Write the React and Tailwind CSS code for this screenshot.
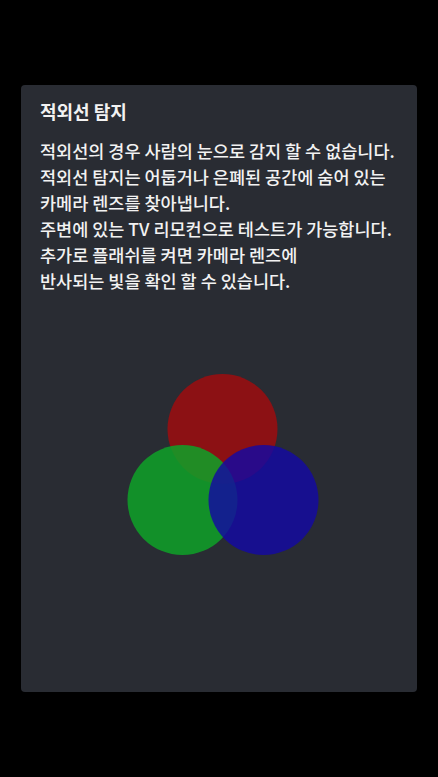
import React from 'react'

const lines = [
  '적외선의 경우 사람의 눈으로 감지 할 수 없습니다.',
  '적외선 탐지는 어둡거나 은폐된 공간에 숨어 있는',
  '카메라 렌즈를 찾아냅니다.',
  '주변에 있는 TV 리모컨으로 테스트가 가능합니다.',
  '추가로 플래쉬를 켜면 카메라 렌즈에',
  '반사되는 빛을 확인 할 수 있습니다.',
]

// three overlapping light circles
const RgbCircles = () => (
  <svg width="200" height="200" viewBox="0 0 200 200" className="block mx-auto">
    <circle cx="103.5" cy="64" r="55" fill="#8c1114" />
    <circle cx="63.5" cy="135" r="55" fill="#0ea228" fillOpacity="0.85" />
    <circle cx="144.5" cy="135" r="55" fill="#1309a3" fillOpacity="0.82" />
  </svg>
)

export default function App() {
  return (
    <div
      className="w-full h-[777px] bg-black py-[85px] px-[21px]"
      style={{ fontFamily: '"Noto Sans CJK KR", "Noto Sans", sans-serif' }}
    >
      <div className="h-full bg-[#292c33] rounded-[4px] px-[19px] pt-[12px]">
        <h1 className="text-[18px] leading-[28px] font-bold text-[#f2f2f2]">적외선 탐지</h1>
        <div className="mt-[13px] text-[17.5px] leading-[26px] font-medium text-[#f2f2f2]">
          {lines.map((l) => (
            <p key={l} className="whitespace-nowrap">{l}</p>
          ))}
        </div>
        <div className="mt-[71px]">
          <RgbCircles />
        </div>
      </div>
    </div>
  )
}
